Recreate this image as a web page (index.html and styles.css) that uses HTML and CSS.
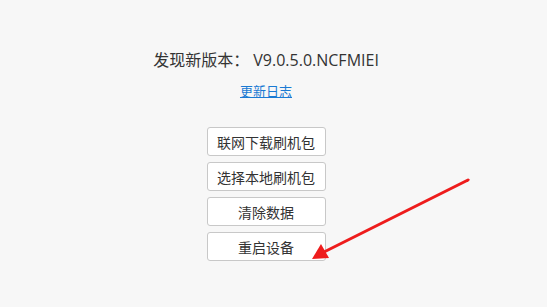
FILE: index.html
```html
<!DOCTYPE html>
<html lang="zh">
<head>
<meta charset="utf-8">
<link rel="stylesheet" href="styles.css">
</head>
<body>
<div class="page">
  <div class="title">发现新版本： V9.0.5.0.NCFMIEI</div>
  <a class="log" href="#">更新日志</a>
  <div class="actions">
    <button class="btn">联网下载刷机包</button>
    <button class="btn">选择本地刷机包</button>
    <button class="btn">清除数据</button>
    <button class="btn">重启设备</button>
  </div>
</div>
<svg class="arrow" width="547" height="307" viewBox="0 0 547 307">
  <line x1="468" y1="180" x2="324" y2="252" stroke="#ee1c1c" stroke-width="3" stroke-linecap="round"/>
  <polygon points="312,259 321,244 329,258" fill="#ee1c1c"/>
</svg>
</body>
</html>
```
FILE: styles.css
```css
html, body {
  margin: 0;
  padding: 0;
  background: #f7f7f7;
  font-family: "Open Sans", "Noto Sans CJK SC", sans-serif;
  color: #333;
}
.page {
  width: 532px;
  padding-top: 49px;
  display: flex;
  flex-direction: column;
  align-items: center;
}
.title {
  font-size: 16px;
  line-height: 22px;
  color: #333;
}
.log {
  margin-top: 11px;
  font-size: 13px;
  line-height: 18px;
  color: #1a7ad3;
  text-decoration: underline;
  font-family: "Noto Sans CJK SC", sans-serif;
}
.actions {
  margin-top: 27px;
  display: flex;
  flex-direction: column;
  gap: 6px;
}
.btn {
  width: 119px;
  height: 29px;
  padding: 0;
  background: #fff;
  border: 1px solid #c8c8c8;
  border-radius: 3px;
  font-family: "Noto Sans CJK SC", sans-serif;
  font-size: 14px;
  color: #333;
}
.arrow {
  position: absolute;
  left: 0;
  top: 0;
  pointer-events: none;
}
```
